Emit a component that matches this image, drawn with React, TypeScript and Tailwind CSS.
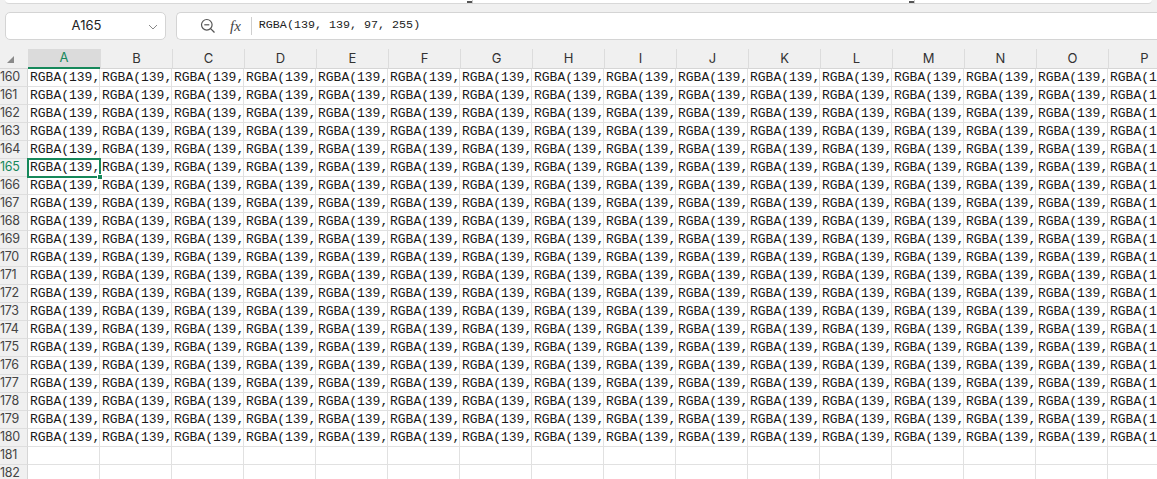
import React from "react";

const COLS = ["A","B","C","D","E","F","G","H","I","J","K","L","M","N","O","P"];
const ROWS = Array.from({ length: 23 }, (_, i) => 160 + i);
const TEXT = "RGBA(139, 139, 97, 255)";
const CELL = "RGBA(139,";

export default function App() {
  return (
    <div className="w-[1157px] h-[479px] overflow-hidden bg-[#f0f0f0] flex flex-col" style={{ fontFamily: "Inter, 'Noto Sans', sans-serif" }}>
      {/* top strip */}
      <div className="h-[12px] px-[5px] shrink-0">
        <div className="relative h-[4px] bg-white rounded-b-[5px] border-b border-[#d8d8d8]">
          <div className="absolute left-[462px] top-[1px] w-[5px] h-[2px] bg-[#555]" />
          <div className="absolute left-[467px] top-0 w-px h-[4px] bg-[#ccc]" />
          <div className="absolute left-[904px] top-[1px] w-[5px] h-[2px] bg-[#555]" />
          <div className="absolute left-[909px] top-0 w-px h-[4px] bg-[#ccc]" />
        </div>
      </div>
      {/* toolbar */}
      <div className="h-[28px] flex items-stretch gap-[10px] pl-[5px] shrink-0">
        <div className="w-[161px] bg-white border border-[#d4d4d4] rounded-[5px] flex items-center relative">
          <span className="flex-1 text-center text-[13px] text-[#222] pl-[2px]">A165</span>
          <svg width="10" height="6" viewBox="0 0 10 6" className="absolute right-[7px] top-[11px]">
            <path d="M1 1 L5 5 L9 1" fill="none" stroke="#888" strokeWidth="1" />
          </svg>
        </div>
        <div className="flex-1 bg-white border border-r-0 border-[#d4d4d4] rounded-l-[5px] flex items-center">
          <svg width="16" height="16" viewBox="0 0 16 16" className="ml-[23px]">
            <circle cx="6.8" cy="6.8" r="5.3" fill="none" stroke="#555" strokeWidth="1.2" />
            <path d="M4.3 6.8 H9.3" stroke="#555" strokeWidth="1.2" />
            <path d="M10.6 10.6 L14.5 14.5" stroke="#555" strokeWidth="1.3" />
          </svg>
          <span className="ml-[14px] text-[15px] italic text-[#444] leading-none" style={{ fontFamily: "'Liberation Serif', serif" }}>fx</span>
          <div className="ml-[10px] w-px h-[18px] bg-[#cfcfcf]" />
          <span className="ml-[7px] text-[11.7px] text-[#222] whitespace-nowrap" style={{ fontFamily: "'Liberation Mono', monospace" }}>{TEXT}</span>
        </div>
      </div>
      <div className="h-[9px] shrink-0" />
      {/* sheet */}
      <div className="grid grid-cols-[28px_repeat(16,72px)] grid-rows-[20px_repeat(23,18px)] flex-1 bg-white">
        {/* header row */}
        <div className="bg-[#f0f0f0] border-b border-[#d6d6d6] flex items-center">
          <svg width="7" height="7" viewBox="0 0 7 7" className="ml-[7px] mt-[2px]">
            <path d="M7 0 L7 7 L0 7 Z" fill="#8a8a8a" />
          </svg>
        </div>
        {COLS.map((c, i) => (
          <div
            key={c}
            className={
              i === 0
                ? "bg-[#dbdbdb] border-b-2 border-[#16885a] flex items-center justify-center text-[13px] text-[#16885a]"
                : "bg-[#f0f0f0] border-b border-l border-b-[#d6d6d6] border-l-[#dcdcdc] flex items-center justify-center text-[13px] text-[#333]"
            }
          >
            {c}
          </div>
        ))}
        {ROWS.map((r) => (
          <React.Fragment key={r}>
            <div
              className={
                "bg-[#f0f0f0] border-b border-r border-b-[#dedede] border-r-[#d6d6d6] flex items-center text-[12.5px] tracking-[-0.3px] " +
                (r === 165 ? "text-[#16885a]" : "text-[#444]")
              }
            >
              {r}
            </div>
            {COLS.map((c, i) => (
              <div
                key={c}
                className={
                  "border-b border-r border-[#e1e1e1] whitespace-nowrap flex items-center pl-[2px] text-[13px] text-[#1a1a1a]" +
                  (r === 165 && i === 0 ? " relative" : " overflow-hidden")
                }
                style={{ fontFamily: "'Liberation Mono', monospace" }}
              >
                {r <= 180 ? <span>{CELL}</span> : null}
                {r === 165 && i === 0 ? (
                  <>
                    <div className="absolute left-[-1px] top-[-1px] w-[74px] h-[20px] border-2 border-[#16885a] pointer-events-none" />
                    <div className="absolute left-[69px] top-[15px] w-[6px] h-[6px] bg-[#16885a] border border-white" />
                  </>
                ) : null}
              </div>
            ))}
          </React.Fragment>
        ))}
      </div>
    </div>
  );
}
